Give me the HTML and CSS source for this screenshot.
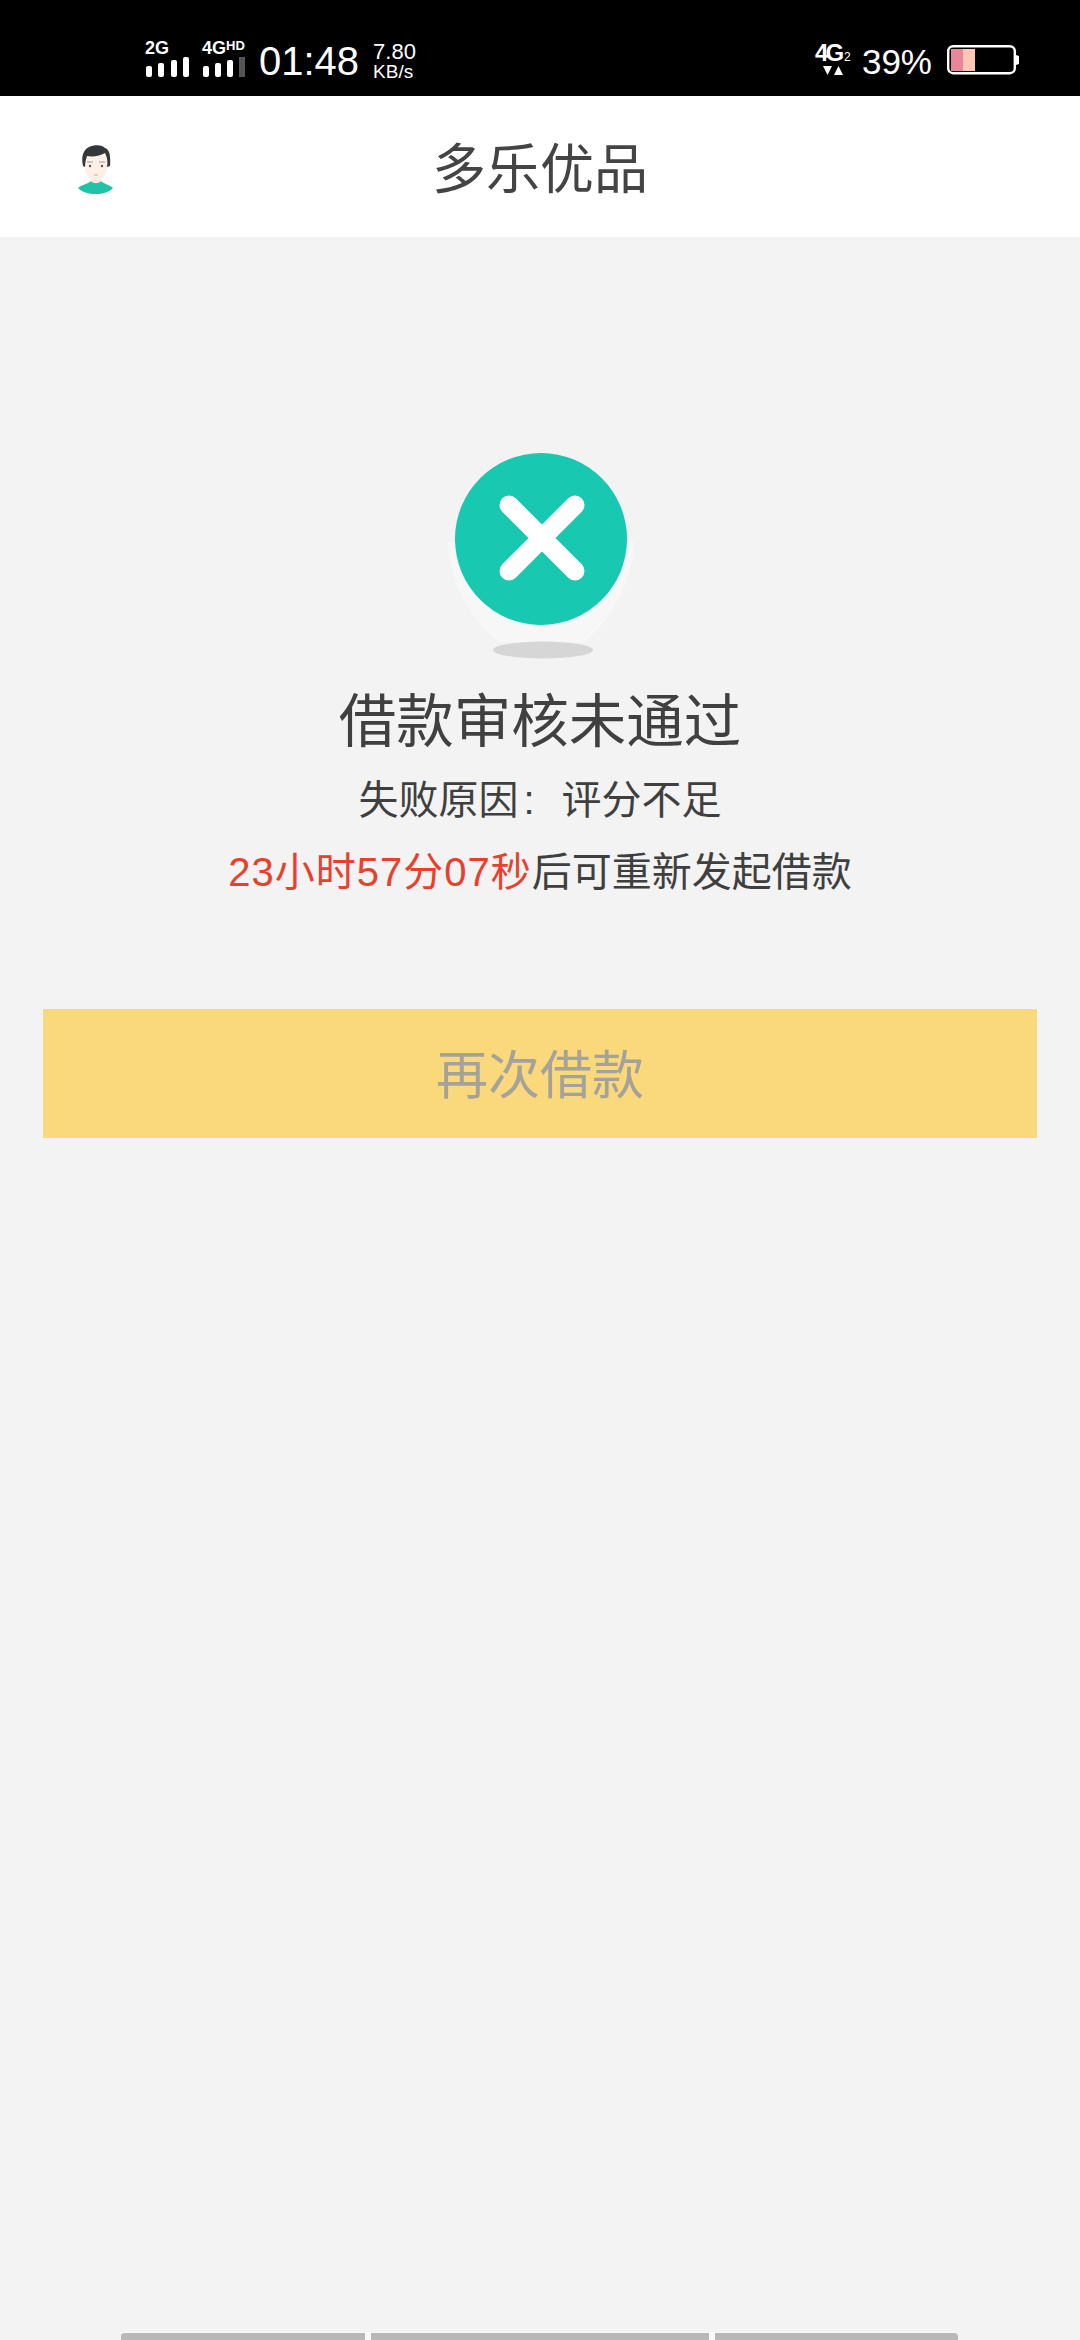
FILE: index.html
```html
<!DOCTYPE html>
<html>
  <head>
    <meta charset="utf-8" />
    <title>多乐优品</title>
    <link rel="stylesheet" href="styles.css">
  </head>
  <body>
    <div class="status-bar">
      <div class="status-left">
        <div class="signal">
          <span class="signal-label">2G</span>
          <svg width="46" height="20" viewBox="0 0 46 20">
            <rect x="1" y="9" width="6" height="11" rx="2" fill="#fff" />
            <rect x="13" y="6" width="6" height="14" rx="2" fill="#fff" />
            <rect x="26" y="3" width="6" height="17" rx="2" fill="#fff" />
            <rect x="38" y="0" width="6" height="20" rx="2" fill="#fff" />
          </svg>
        </div>
        <div class="signal">
          <span class="signal-label">4G<sup class="signal-hd">HD</sup></span>
          <svg width="46" height="20" viewBox="0 0 46 20">
            <rect x="1" y="9" width="6" height="11" rx="2" fill="#fff" />
            <rect x="13" y="6" width="6" height="14" rx="2" fill="#fff" />
            <rect x="25" y="3" width="6" height="17" rx="2" fill="#fff" />
            <rect x="37" y="0" width="6" height="20" fill="#555" />
          </svg>
        </div>
        <span class="clock">01:48</span>
        <div class="speed">
          <span class="speed-value">7.80</span>
          <span class="speed-unit">KB/s</span>
        </div>
      </div>
      <div class="status-right">
        <div class="network">
          <span class="network-label">4G<sub class="network-slot">2</sub></span>
          <svg width="20" height="10" viewBox="0 0 20 10">
            <polygon points="0,0 9,0 4.5,9" fill="#fff" />
            <polygon points="11,9 20,9 15.5,0" fill="#fff" />
          </svg>
        </div>
        <span class="battery-text">39%</span>
        <svg class="battery" width="73" height="30" viewBox="0 0 73 30">
          <rect x="1.2" y="1.2" width="66.6" height="27" rx="5" fill="#000" stroke="#fff" stroke-width="2.4" />
          <rect x="4" y="4" width="12" height="22" fill="#e8869a" />
          <rect x="16" y="4" width="12" height="22" fill="#fcc8b4" />
          <path d="M69 10 L72 11 V19 L69 20 Z" fill="#fff" />
        </svg>
      </div>
    </div>

    <div class="header">
      <svg class="avatar" width="36" height="50" viewBox="0 0 36 50">
        <path d="M0 43 C3 40 10 39 13 36 C15 38 21 38 23 36 C26 39 32 40 35 43 C31 47 25 49 18 49 C10 49 4 47 0 43 Z" fill="#1fc4a6" />
        <path d="M13 28 H23 V36 C21 39 15 39 13 36 Z" fill="#fbe6da" />
        <path d="M7 10 H29 V24 C29 31 23 35 18 35 C13 35 7 31 7 24 Z" fill="#fdf0e8" />
        <path d="M5 21 C3 12 5 5 11 2 C17 -1 25 0 27 3 C31 4 33 10 32 21 L29 22 C30 16 29 12 27 8 C22 11 15 12 9 11 C8 14 7 18 7 22 Z" fill="#33373a" />
        <circle cx="12" cy="21" r="1.2" fill="#555" />
        <circle cx="24" cy="21" r="1.2" fill="#555" />
        <path d="M9 17 H15 M21 17 H27" stroke="#999" stroke-width="1" fill="none" />
        <path d="M16 30 H20" stroke="#eebfa8" stroke-width="1.5" fill="none" />
      </svg>
      <h1 class="header-title">多乐优品</h1>
    </div>

    <div class="result">
      <svg class="result-icon" width="188" height="210" viewBox="0 0 188 210">
        <path d="M1 90 C3 130 24 170 52 190 H136 C164 170 185 130 187 90 Z" fill="#f7f7f7" />
        <ellipse cx="96" cy="198" rx="50" ry="8.5" fill="#d6d6d6" />
        <circle cx="94" cy="87" r="86" fill="#19c8b0" />
        <path d="M62 53 L128 119 M128 53 L62 119" stroke="#fff" stroke-width="19" stroke-linecap="round" fill="none" />
      </svg>
      <h2 class="result-title">借款审核未通过</h2>
      <p class="result-reason">失败原因<span class="reason-colon">:</span>评分不足</p>
      <p class="result-countdown"><span class="countdown-time">23小时57分07秒</span>后可重新发起借款</p>
    </div>

    <div class="action">
      <div class="action-btn">再次借款</div>
    </div>

    <div class="nav-bar">
      <div class="nav-seg nav-seg-left"></div>
      <div class="nav-seg nav-seg-mid"></div>
      <div class="nav-seg nav-seg-right"></div>
    </div>
  </body>
</html>
```

FILE: styles.css
```css
* {
  box-sizing: border-box;
}

html,
body {
  margin: 0;
  height: 100%;
}

body {
  display: flex;
  flex-direction: column;
  height: 2340px;
  background-color: #f3f3f3;
  font-family: "Liberation Sans", "Noto Sans CJK SC", sans-serif;
  color: #3f3f3f;
  overflow: hidden;
}

.status-bar {
  display: flex;
  justify-content: space-between;
  align-items: center;
  height: 96px;
  padding: 20px 60px 0 145px;
  background-color: #000;
  color: #fff;
}

.status-left,
.status-right {
  display: flex;
  align-items: center;
}

.signal {
  display: flex;
  flex-direction: column;
  width: 57px;
}

.signal svg {
  display: block;
}

.signal-label {
  height: 17px;
  font-size: 18px;
  line-height: 17px;
  font-weight: bold;
}

.signal-hd {
  font-size: 13px;
  line-height: 12px;
  vertical-align: 4px;
}

.clock {
  margin-top: 6px;
  font-size: 40px;
  line-height: 1;
}

.speed {
  display: flex;
  flex-direction: column;
  margin: 8px 0 0 14px;
}

.speed-value {
  font-size: 22px;
  line-height: 20px;
}

.speed-unit {
  font-size: 19px;
  line-height: 20px;
}

.network {
  display: flex;
  flex-direction: column;
  align-items: center;
  width: 36px;
  margin-top: 2px;
}

.network svg {
  display: block;
  margin-top: 2px;
}

.network-label {
  height: 22px;
  font-size: 24px;
  line-height: 22px;
  font-weight: bold;
  letter-spacing: -3px;
}

.network-slot {
  margin-left: 3px;
  font-size: 12px;
  font-weight: normal;
  line-height: 10px;
  letter-spacing: 0;
  vertical-align: 0;
}

.battery-text {
  margin: 6px 0 0 11px;
  font-size: 35px;
  line-height: 1;
}

.battery {
  margin: 4px 0 0 15px;
}

.header {
  position: relative;
  display: flex;
  justify-content: center;
  align-items: center;
  height: 141px;
  padding-top: 6px;
  background-color: #fff;
}

.avatar {
  position: absolute;
  left: 78px;
  top: 49px;
}

.header-title {
  margin: 0;
  font-size: 54px;
  font-weight: normal;
  line-height: 1;
  color: #444;
}

.result {
  display: flex;
  flex-direction: column;
  align-items: center;
}

.result-icon {
  margin: 215px 0 0 2px;
}

.result-title {
  margin: 25px 0 0;
  font-size: 57.5px;
  font-weight: normal;
  line-height: 70px;
  color: #404040;
}

.result-reason {
  margin: 13px 0 0;
  font-size: 40px;
  line-height: 60px;
}

.reason-colon {
  display: inline-block;
  width: 43px;
  padding-left: 5px;
}

.result-countdown {
  margin: 12px 0 0;
  font-size: 40px;
  line-height: 60px;
}

.countdown-time {
  color: #e8402c;
  letter-spacing: 1px;
}

.action {
  padding: 0 43px;
  margin-top: 107px;
}

.action-btn {
  height: 129px;
  padding-top: 6px;
  background-color: #f9d97c;
  color: #a4a29a;
  font-size: 52px;
  line-height: 123px;
  text-align: center;
}

.nav-bar {
  display: flex;
  margin-top: auto;
  height: 8px;
  padding: 0 122px 0 121px;
}

.nav-seg {
  background-color: #b8b8b8;
  border-top: 1px solid #fafafa;
}

.nav-seg-left {
  width: 244px;
  border-radius: 4px 0 0 0;
}

.nav-seg-mid {
  width: 350px;
  border-left: 6px solid #fafafa;
  border-right: 6px solid #fafafa;
}

.nav-seg-right {
  width: 243px;
  border-radius: 0 4px 0 0;
}
```
